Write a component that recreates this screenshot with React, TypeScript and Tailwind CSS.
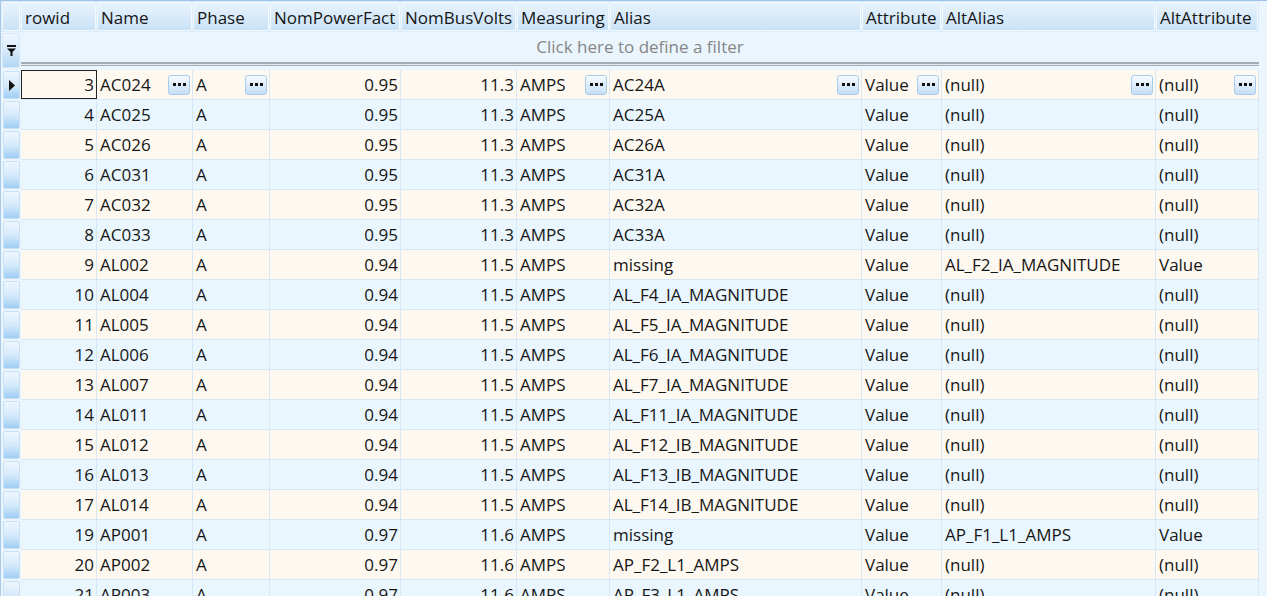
import React from "react";

type Col = {
  key: string;
  title: string;
  width: string;
  right?: boolean;
};

// column widths taken from the grid lines in the screenshot
const columns: Col[] = [
  { key: "rowid", title: "rowid", width: "w-[76px]", right: true },
  { key: "name", title: "Name", width: "w-[96px]" },
  { key: "phase", title: "Phase", width: "w-[77px]" },
  { key: "pf", title: "NomPowerFact", width: "w-[131px]", right: true },
  { key: "volts", title: "NomBusVolts", width: "w-[116px]", right: true },
  { key: "meas", title: "Measuring", width: "w-[93px]" },
  { key: "alias", title: "Alias", width: "w-[252px]" },
  { key: "attr", title: "Attribute", width: "w-[80px]" },
  { key: "altAlias", title: "AltAlias", width: "w-[214px]" },
  { key: "altAttr", title: "AltAttribute", width: "w-[103px]" },
];

// columns that show the "..." editor button on the current row
const editable = ["name", "phase", "meas", "alias", "attr", "altAlias", "altAttr"];

type Row = Record<string, string>;

const mk = (
  rowid: string,
  name: string,
  pf: string,
  volts: string,
  alias: string,
  altAlias = "(null)",
  altAttr = "(null)"
): Row => ({
  rowid,
  name,
  phase: "A",
  pf,
  volts,
  meas: "AMPS",
  alias,
  attr: "Value",
  altAlias,
  altAttr,
});

const rows: Row[] = [
  mk("3", "AC024", "0.95", "11.3", "AC24A"),
  mk("4", "AC025", "0.95", "11.3", "AC25A"),
  mk("5", "AC026", "0.95", "11.3", "AC26A"),
  mk("6", "AC031", "0.95", "11.3", "AC31A"),
  mk("7", "AC032", "0.95", "11.3", "AC32A"),
  mk("8", "AC033", "0.95", "11.3", "AC33A"),
  mk("9", "AL002", "0.94", "11.5", "missing", "AL_F2_IA_MAGNITUDE", "Value"),
  mk("10", "AL004", "0.94", "11.5", "AL_F4_IA_MAGNITUDE"),
  mk("11", "AL005", "0.94", "11.5", "AL_F5_IA_MAGNITUDE"),
  mk("12", "AL006", "0.94", "11.5", "AL_F6_IA_MAGNITUDE"),
  mk("13", "AL007", "0.94", "11.5", "AL_F7_IA_MAGNITUDE"),
  mk("14", "AL011", "0.94", "11.5", "AL_F11_IA_MAGNITUDE"),
  mk("15", "AL012", "0.94", "11.5", "AL_F12_IB_MAGNITUDE"),
  mk("16", "AL013", "0.94", "11.5", "AL_F13_IB_MAGNITUDE"),
  mk("17", "AL014", "0.94", "11.5", "AL_F14_IB_MAGNITUDE"),
  mk("19", "AP001", "0.97", "11.6", "missing", "AP_F1_L1_AMPS", "Value"),
  mk("20", "AP002", "0.97", "11.6", "AP_F2_L1_AMPS"),
  mk("21", "AP003", "0.97", "11.6", "AP_F3_L1_AMPS"),
];

function EllipsisButton() {
  return (
    <div className="flex h-[20px] w-[22px] shrink-0 items-center justify-center gap-[2px] rounded-[3px] border border-[#a9cbea] bg-linear-to-b from-[#f7fbff] to-[#c4dff7]">
      <span className="h-[3px] w-[3px] bg-[#111]" />
      <span className="h-[3px] w-[3px] bg-[#111]" />
      <span className="h-[3px] w-[3px] bg-[#111]" />
    </div>
  );
}

function IndicatorCell({ current }: { current?: boolean }) {
  return (
    <div className="flex h-full w-[20px] shrink-0 items-stretch py-[1px] pl-[2px] pr-[1px]">
      <div className="flex flex-1 items-center justify-center rounded-[2px] border border-[#c9e1f6] bg-linear-to-b from-[#eef6fe] via-[#d6eafb] to-[#9fcdf3]">
        {current && (
          <svg width="6" height="11" viewBox="0 0 6 11">
            <path d="M0 0 L6 5.5 L0 11 Z" fill="#111" />
          </svg>
        )}
      </div>
    </div>
  );
}

export default function App() {
  return (
    <div
      className="h-[596px] w-[1267px] overflow-hidden border-l border-[#a9c9e8] bg-[#eaf5fd] text-[17px] text-[#161616]"
      style={{ fontFamily: '"Open Sans", "Noto Sans", sans-serif' }}
    >
      {/* header */}
      <div className="flex h-[32px] border-t border-[#9dc3e8] bg-[#dcecfa]">
        <div className="flex h-full w-[20px] shrink-0 py-[1px] pl-[1px] pr-[1px]">
          <div className="flex-1 rounded-[2px] border border-[#f1f8fe] bg-linear-to-b from-[#e8f3fc] to-[#c9e2f7]" />
        </div>
        {columns.map((c) => (
          <div key={c.key} className={`${c.width} flex h-full shrink-0 py-[1px] pr-[1px]`}>
            <div className="flex flex-1 items-center overflow-hidden whitespace-nowrap rounded-[2px] border border-[#f1f8fe] bg-linear-to-b from-[#e8f3fc] to-[#c9e2f7] pl-[3px] pt-[2px] leading-none">
              {c.title}
            </div>
          </div>
        ))}
        <div className="flex-1 bg-[#eaf5fd]" />
      </div>

      {/* filter row */}
      <div className="flex h-[30px] bg-[#eaf5fd]">
        <div className="flex h-[37px] w-[20px] shrink-0 py-[1px] pl-[1px] pr-[1px]">
          <div className="flex flex-1 items-center justify-center rounded-[2px] border border-[#d5e8f8] bg-linear-to-b from-[#eef6fe] via-[#d8eafb] to-[#b3d7f5]">
            <svg width="9" height="11" viewBox="0 0 9 11">
              <rect x="0" y="0" width="9" height="2" fill="#111" />
              <path d="M0 3.5 H9 L5.5 7 V11 H3.5 V7 Z" fill="#111" />
            </svg>
          </div>
        </div>
        <div className="flex w-[1238px] items-center justify-center text-[#868686]">
          Click here to define a filter
        </div>
      </div>

      {/* separator between filter row and data */}
      <div className="flex h-[8px]">
        <div className="w-[20px] shrink-0" />
        <div className="w-[1238px]">
          <div className="h-[4px] border-t-2 border-b border-[#a3acb5] bg-[#e1ebf4]" />
        </div>
      </div>

      {/* data rows */}
      {rows.map((r, i) => {
        const current = i === 0;
        const bg = i % 2 === 0 ? "bg-[#fef9f0]" : "bg-[#eaf6fe]";
        return (
          <div key={r.rowid} className="flex h-[30px]">
            <IndicatorCell current={current} />
            <div className={`flex h-full w-[1238px] shrink-0 border-b border-[#d7e7f6] ${bg}`}>
              {columns.map((c) => {
                const focused = current && c.key === "rowid";
                return (
                  <div
                    key={c.key}
                    className={`${c.width} flex h-full shrink-0 items-center overflow-hidden whitespace-nowrap border-r border-[#d7e7f6] ${
                      c.right ? "justify-end pr-[2px]" : "pl-[3px] pr-[2px]"
                    } ${focused ? "outline outline-1 -outline-offset-1 outline-[#222]" : ""}`}
                  >
                    <span className={c.right ? "" : "flex-1"}>{r[c.key]}</span>
                    {current && editable.includes(c.key) && <EllipsisButton />}
                  </div>
                );
              })}
            </div>
          </div>
        );
      })}
    </div>
  );
}
